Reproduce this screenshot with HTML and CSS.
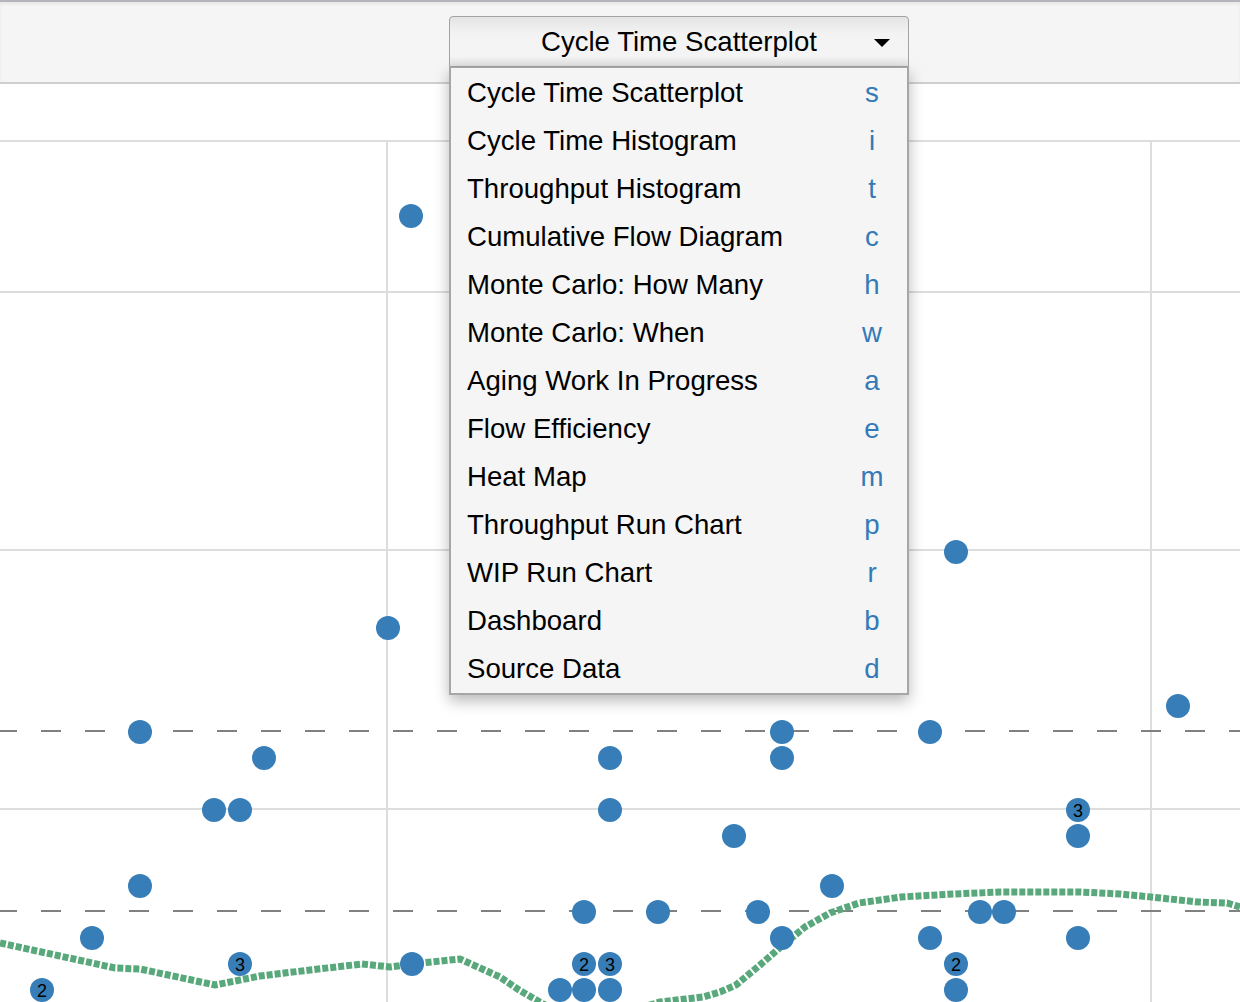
FILE: index.html
```html
<!DOCTYPE html>
<html>
<head>
<meta charset="utf-8">
<link rel="stylesheet" href="styles.css">
</head>
<body>
<div class="toolbar">
  <div class="dropdown">
    <div class="dd-button">Cycle Time Scatterplot<span class="caret"></span></div>
    <ul class="dd-menu">
      <li><span>Cycle Time Scatterplot</span><span class="key">s</span></li>
      <li><span>Cycle Time Histogram</span><span class="key">i</span></li>
      <li><span>Throughput Histogram</span><span class="key">t</span></li>
      <li><span>Cumulative Flow Diagram</span><span class="key">c</span></li>
      <li><span>Monte Carlo: How Many</span><span class="key">h</span></li>
      <li><span>Monte Carlo: When</span><span class="key">w</span></li>
      <li><span>Aging Work In Progress</span><span class="key">a</span></li>
      <li><span>Flow Efficiency</span><span class="key">e</span></li>
      <li><span>Heat Map</span><span class="key">m</span></li>
      <li><span>Throughput Run Chart</span><span class="key">p</span></li>
      <li><span>WIP Run Chart</span><span class="key">r</span></li>
      <li><span>Dashboard</span><span class="key">b</span></li>
      <li><span>Source Data</span><span class="key">d</span></li>
    </ul>
  </div>
</div>
<svg class="chart" width="1240" height="918" viewBox="0 84 1240 918">
  <g class="grid">
    <line x1="0" y1="141" x2="1240" y2="141"/>
    <line x1="0" y1="292" x2="1240" y2="292"/>
    <line x1="0" y1="550" x2="1240" y2="550"/>
    <line x1="0" y1="809" x2="1240" y2="809"/>
    <line x1="387" y1="140" x2="387" y2="1002"/>
    <line x1="1151" y1="140" x2="1151" y2="1002"/>
  </g>
  <g class="pct">
    <line x1="-3" y1="731" x2="1240" y2="731"/>
    <line x1="-3" y1="911" x2="1240" y2="911"/>
  </g>
  <polyline class="trend" points="0,943 60,956 115,968 140,969 215,985 260,976 310,970 362,964 390,967 412,964 460,959 500,977 519,990 545,1005 600,1020 640,1008 660,1002 703,997 720,992 736,985 760,965 783,945 805,927 830,913 859,903 901,897 953,894 1000,892 1080,892 1120,894 1151,897 1198,902 1227,903 1240,907"/>
  <g class="dots">
    <circle cx="411" cy="216" r="12"/>
    <circle cx="388" cy="628" r="12"/>
    <circle cx="956" cy="552" r="12"/>
    <circle cx="1178" cy="706" r="12"/>
    <circle cx="140" cy="732" r="12"/>
    <circle cx="264" cy="758" r="12"/>
    <circle cx="214" cy="810" r="12"/>
    <circle cx="240" cy="810" r="12"/>
    <circle cx="610" cy="758" r="12"/>
    <circle cx="610" cy="810" r="12"/>
    <circle cx="782" cy="732" r="12"/>
    <circle cx="782" cy="758" r="12"/>
    <circle cx="930" cy="732" r="12"/>
    <circle cx="734" cy="836" r="12"/>
    <circle cx="1078" cy="810" r="12"/>
    <circle cx="1078" cy="836" r="12"/>
    <circle cx="140" cy="886" r="12"/>
    <circle cx="832" cy="886" r="12"/>
    <circle cx="92" cy="938" r="12"/>
    <circle cx="584" cy="912" r="12"/>
    <circle cx="658" cy="912" r="12"/>
    <circle cx="758" cy="912" r="12"/>
    <circle cx="980" cy="912" r="12"/>
    <circle cx="1004" cy="912" r="12"/>
    <circle cx="782" cy="938" r="12"/>
    <circle cx="930" cy="938" r="12"/>
    <circle cx="1078" cy="938" r="12"/>
    <circle cx="240" cy="964" r="12"/>
    <circle cx="412" cy="964" r="12"/>
    <circle cx="584" cy="964" r="12"/>
    <circle cx="610" cy="964" r="12"/>
    <circle cx="956" cy="964" r="12"/>
    <circle cx="42" cy="990" r="12"/>
    <circle cx="560" cy="990" r="12"/>
    <circle cx="584" cy="990" r="12"/>
    <circle cx="610" cy="990" r="12"/>
    <circle cx="956" cy="990" r="12"/>
  </g>
  <g class="counts">
    <text x="1078" y="816.5">3</text>
    <text x="240" y="970.5">3</text>
    <text x="584" y="970.5">2</text>
    <text x="610" y="970.5">3</text>
    <text x="956" y="970.5">2</text>
    <text x="42" y="996.5">2</text>
  </g>
</svg>
</body>
</html>
```
FILE: styles.css
```css
html, body {
  margin: 0;
  padding: 0;
  background: #ffffff;
  font-family: "Liberation Sans", Arial, Helvetica, sans-serif;
  overflow: hidden;
}

.toolbar {
  height: 80px;
  background: #f5f5f5;
  border-top: 2px solid #b4b5ba;
  border-bottom: 2px solid #cfcfcf;
  box-shadow: inset 0 2px 3px rgba(0, 0, 0, 0.06);
  display: flex;
  align-items: flex-start;
  padding-left: 449px;
  position: relative;
  z-index: 2;
}

.dropdown {
  position: relative;
  margin-top: 14px;
  width: 460px;
}

.dd-button {
  box-sizing: border-box;
  height: 51px;
  width: 460px;
  border: 1px solid #a2a2a2;
  border-radius: 4px 4px 0 0;
  background: linear-gradient(to bottom, #e4e4e4 0%, #f3f3f3 35%, #f4f4f4 80%, #e2e2e2 100%);
  font-size: 27.6px;
  color: #000;
  text-align: center;
  line-height: 49px;
  position: relative;
}

.caret {
  position: absolute;
  right: 18px;
  top: 22px;
  width: 0;
  height: 0;
  border-left: 8px solid transparent;
  border-right: 8px solid transparent;
  border-top: 8px solid #000;
}

.dd-menu {
  position: absolute;
  left: 0;
  top: 51px;
  box-sizing: border-box;
  width: 460px;
  margin: 0;
  padding: 1px 0 0 0;
  list-style: none;
  background: #f5f5f5;
  border: 2px solid #a6a6a6;
  border-top: 1px solid #a6a6a6;
  box-shadow: 0 6px 14px rgba(0, 0, 0, 0.28);
}

.dd-menu li {
  display: flex;
  justify-content: space-between;
  align-items: center;
  height: 48px;
  padding-left: 16px;
  font-size: 27.6px;
  color: #000;
}

.dd-menu .key {
  width: 30px;
  margin-right: 20px;
  text-align: center;
  color: #337ab7;
}

.chart {
  display: block;
}

.grid line {
  stroke: #dddddd;
  stroke-width: 2;
}

.pct line {
  stroke: #808080;
  stroke-width: 2;
  stroke-dasharray: 20 24;
}

.trend {
  fill: none;
  stroke: #58a87c;
  stroke-width: 7;
  stroke-dasharray: 6 2;
}

.dots circle {
  fill: #377eb8;
}

.counts text {
  font-family: "Liberation Sans", Arial, sans-serif;
  font-size: 18px;
  fill: #000;
  text-anchor: middle;
}
```
